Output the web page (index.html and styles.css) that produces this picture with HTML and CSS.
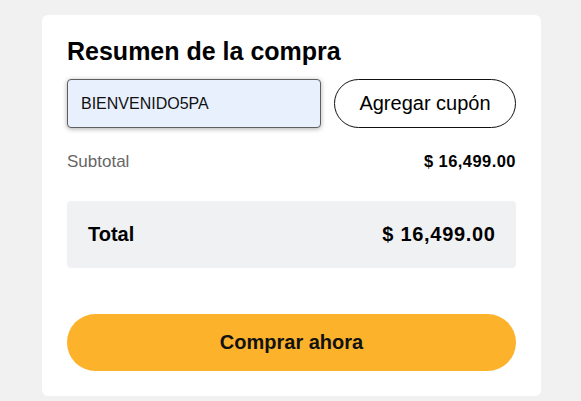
FILE: index.html
```html
<!DOCTYPE html>
<html lang="es">
<head>
<meta charset="utf-8">
<title>Resumen de la compra</title>
<link rel="stylesheet" href="styles.css">
</head>
<body>
<section class="card">
  <h2 class="title">Resumen de la compra</h2>
  <div class="coupon">
    <input class="coupon-input" type="text" value="BIENVENIDO5PA">
    <button class="coupon-btn" type="button">Agregar cupón</button>
  </div>
  <div class="subtotal">
    <span class="sub-label">Subtotal</span>
    <span class="sub-value">$ 16,499.00</span>
  </div>
  <div class="total">
    <span class="total-label">Total</span>
    <span class="total-value">$ 16,499.00</span>
  </div>
  <button class="buy" type="button">Comprar ahora</button>
</section>
</body>
</html>
```

FILE: styles.css
```css
html, body {
  margin: 0;
  padding: 0;
}
body {
  background: #f2f1f2;
  font-family: "Liberation Sans", Arial, sans-serif;
  color: #000;
  padding-top: 15px;
  padding-left: 42px;
}
.card {
  box-sizing: border-box;
  width: 499px;
  background: #fff;
  border-radius: 6px;
  padding: 22px 25px 25px 25px;
  display: flex;
  flex-direction: column;
}
.title {
  margin: 0;
  font-size: 25px;
  font-weight: bold;
  line-height: 28px;
}
.coupon {
  margin-top: 14px;
  display: flex;
  gap: 13px;
  height: 49px;
}
.coupon-input {
  box-sizing: border-box;
  width: 254px;
  height: 49px;
  margin: 0;
  border: 1px solid #5f5f5f;
  border-radius: 4px;
  background: #e8f0fe;
  box-shadow: 0 1px 5px rgba(0, 0, 0, 0.32);
  padding: 0 13px;
  font-family: "Liberation Sans", Arial, sans-serif;
  font-size: 16px;
  color: #111;
  outline: none;
}
.coupon-btn {
  box-sizing: border-box;
  flex: 1;
  height: 49px;
  margin: 0;
  border: 1px solid #111;
  border-radius: 25px;
  background: #fff;
  font-family: "Liberation Sans", Arial, sans-serif;
  font-size: 20px;
  color: #000;
  padding: 0;
}
.subtotal {
  margin-top: 24px;
  display: flex;
  justify-content: space-between;
  align-items: center;
  height: 19px;
}
.sub-label {
  font-size: 17px;
  color: #666;
}
.sub-value {
  font-size: 16.5px;
  font-weight: bold;
  letter-spacing: 0.45px;
}
.total {
  margin-top: 30px;
  height: 67px;
  box-sizing: border-box;
  background: #f0f1f3;
  border-radius: 4px;
  padding: 0 21px;
  display: flex;
  justify-content: space-between;
  align-items: center;
  font-weight: bold;
}
.total-label {
  font-size: 20px;
}
.total-value {
  font-size: 20px;
  letter-spacing: 0.7px;
  margin-right: -0.7px;
}
.buy {
  margin: 46px 0 0 0;
  height: 57px;
  border: none;
  border-radius: 29px;
  background: #fdb22b;
  font-family: "Liberation Sans", Arial, sans-serif;
  font-size: 20px;
  font-weight: bold;
  color: #111;
  padding: 0;
}
```
